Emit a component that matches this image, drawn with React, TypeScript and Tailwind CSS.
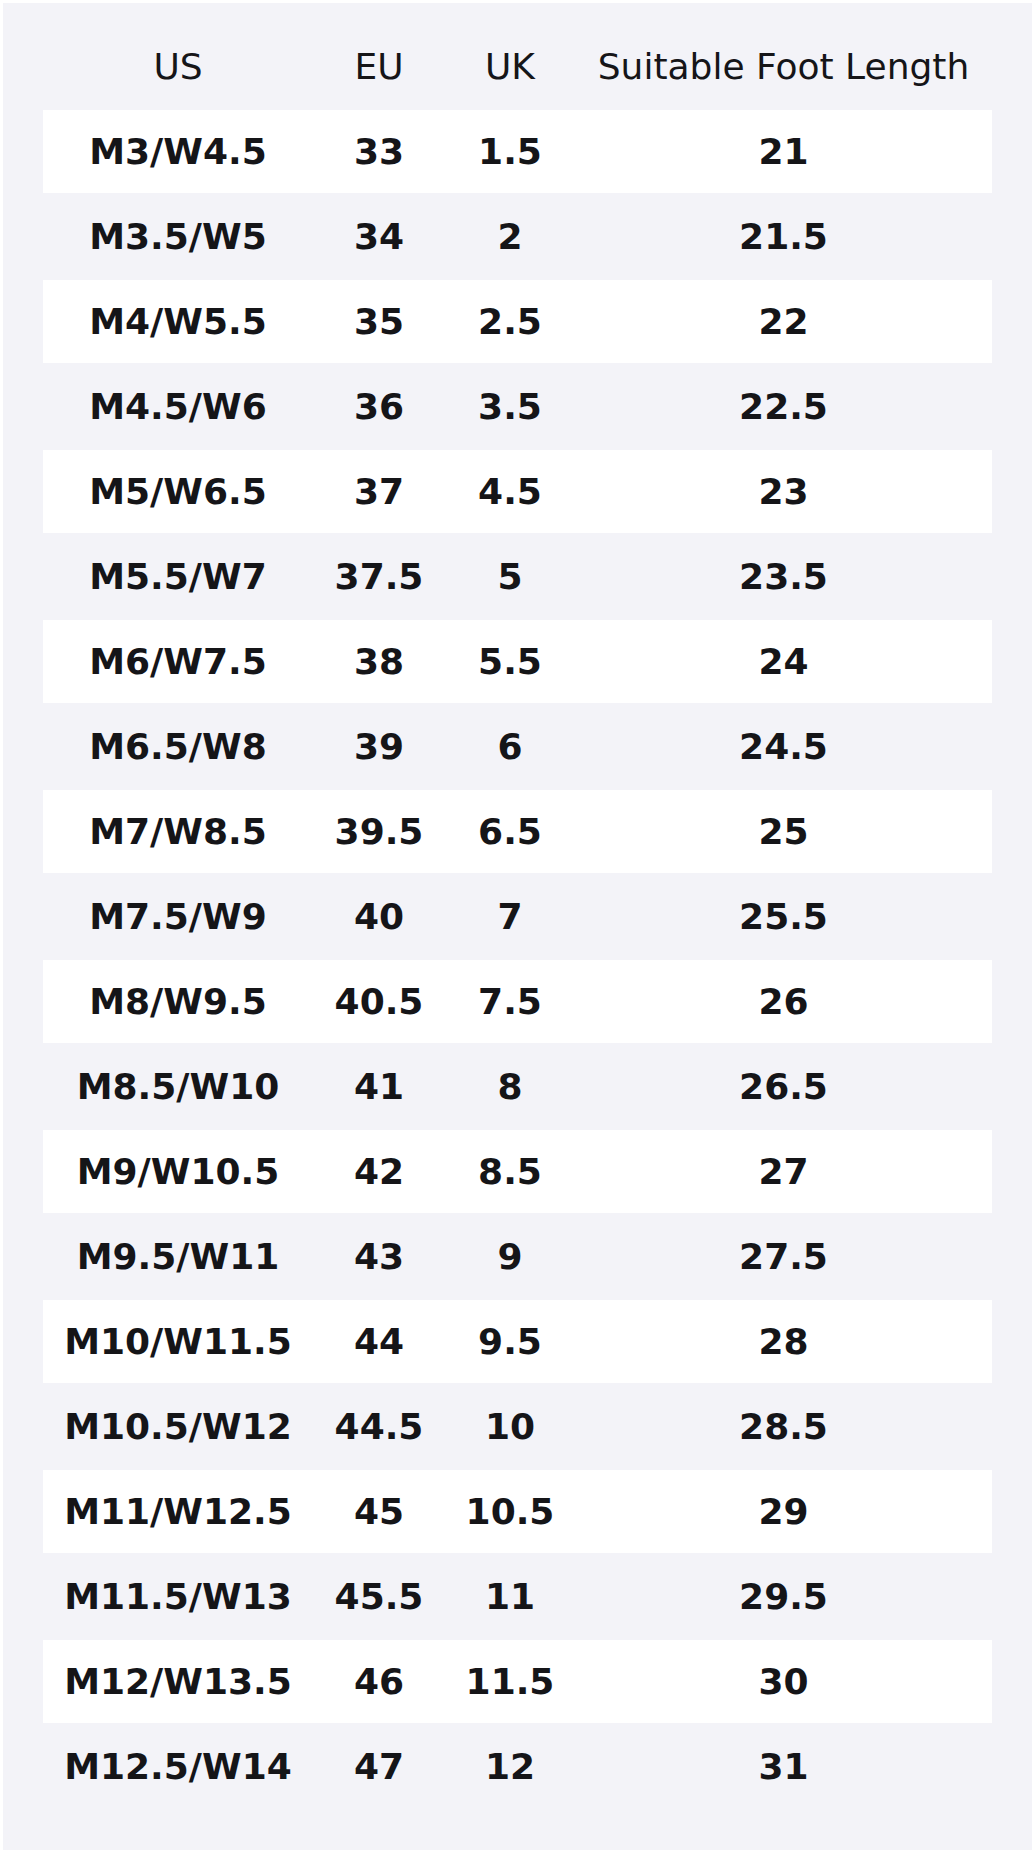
const rows: [string, string, string, string][] = [
  ['M3/W4.5', '33', '1.5', '21'],
  ['M3.5/W5', '34', '2', '21.5'],
  ['M4/W5.5', '35', '2.5', '22'],
  ['M4.5/W6', '36', '3.5', '22.5'],
  ['M5/W6.5', '37', '4.5', '23'],
  ['M5.5/W7', '37.5', '5', '23.5'],
  ['M6/W7.5', '38', '5.5', '24'],
  ['M6.5/W8', '39', '6', '24.5'],
  ['M7/W8.5', '39.5', '6.5', '25'],
  ['M7.5/W9', '40', '7', '25.5'],
  ['M8/W9.5', '40.5', '7.5', '26'],
  ['M8.5/W10', '41', '8', '26.5'],
  ['M9/W10.5', '42', '8.5', '27'],
  ['M9.5/W11', '43', '9', '27.5'],
  ['M10/W11.5', '44', '9.5', '28'],
  ['M10.5/W12', '44.5', '10', '28.5'],
  ['M11/W12.5', '45', '10.5', '29'],
  ['M11.5/W13', '45.5', '11', '29.5'],
  ['M12/W13.5', '46', '11.5', '30'],
  ['M12.5/W14', '47', '12', '31'],
];

const cols = 'grid grid-cols-[270px_132px_130px_1fr] items-center text-center';

export default function App() {
  return (
    <div className="bg-white p-[3px] font-['DejaVu_Sans',sans-serif] text-[#151518]">
      {/* size chart panel */}
      <div className="bg-[#f3f3f8] px-[40px] pt-[20px] pb-[40px]">
        <div className={`${cols} h-[87px] text-[36px] font-normal`}>
          <div>US</div>
          <div>EU</div>
          <div>UK</div>
          <div>Suitable Foot Length</div>
        </div>
        {rows.map((r, i) => (
          <div
            key={i}
            className={`${cols} text-[36px] font-bold ${
              i % 2 === 0 ? 'h-[83px] bg-white' : 'h-[87px]'
            }`}
          >
            <div>{r[0]}</div>
            <div>{r[1]}</div>
            <div>{r[2]}</div>
            <div>{r[3]}</div>
          </div>
        ))}
      </div>
    </div>
  );
}
